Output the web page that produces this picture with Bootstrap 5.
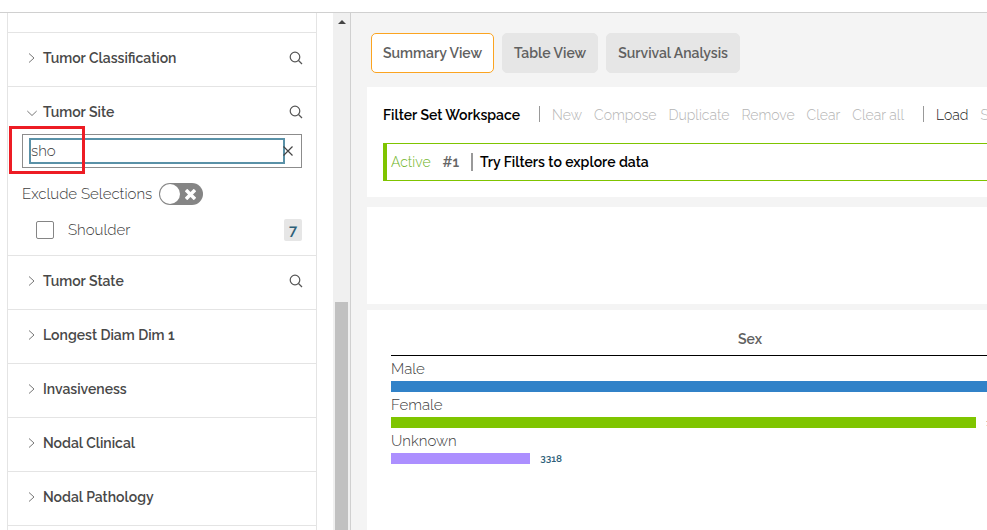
<!DOCTYPE html>
<html lang="en">
<head>
<meta charset="utf-8">
<meta name="viewport" content="width=device-width, initial-scale=1">
<title>Data Explorer</title>
<link href="https://cdn.jsdelivr.net/npm/bootstrap@5.3.0/dist/css/bootstrap.min.css" rel="stylesheet">
<style>
  body { font-family: Raleway, Lato, "Open Sans", sans-serif; font-size: 15px; line-height: 20px; color: #404040; font-weight: 300; }
  button { font: inherit; color: inherit; }
  .top-strip { height: 13px; border-bottom: 1px solid #d0d0d0; }
  .side-pane { width: 351px; border-right: 1px solid #d0d0d0; }
  .facet-list { margin: 0 16px 0 7px; border: solid #e4e4e4; border-width: 0 1px; }
  .facet { border-bottom: 1px solid #e4e4e4; }
  .facet-stub { height: 20px; }
  .facet-head { height: 53px; padding: 0 13px 3px 19px; }
  .facet-open .facet-head { height: 47px; padding-top: 5px; }
  .facet-title { font-weight: 600; font-size: 14px; color: #484848; gap: 6px; }
  .plain-btn { background: none; border: 0; padding: 0; }
  .plain-btn svg { display: block; }
  .facet-body { padding: 0 14px 14px; }
  .search-box { height: 34px; border: 1px solid #8c8c8c; padding: 0 6px; }
  .search-box input { height: 26px; border: 2px solid #5a91a7; padding: 0; color: #404040; font-weight: 300; outline: 0; min-width: 0; }
  .search-box .plain-btn { margin-left: -2px; margin-right: 2px; }
  .callout { position: absolute; left: -14px; top: -9px; width: 76px; height: 48px; border: 3px solid #ed1c24; pointer-events: none; }
  .exclude-row { margin-top: 15px; gap: 7px; }
  .toggle { width: 44px; height: 22px; border-radius: 11px; background: #858585; padding: 0 7px 0 1px; }
  .toggle i { width: 20px; height: 20px; border-radius: 50%; background: #fff; }
  .value-row { margin-top: 14px; padding-left: 14px; }
  .value-row .form-check-input { width: 18px; height: 18px; margin: 0 14px 0 0; border: 1px solid #858585; border-radius: 2px; }
  .tally { width: 18px; height: 22px; background: #e6e6e6; border-radius: 2px; color: #2c6078; font-weight: 600; line-height: 22px; }
  .scroll-track { width: 17px; background: #f0f0f0; padding: 7px 2px 0; }
  .scroll-thumb { width: 13px; margin-top: 278px; background: #c1c1c1; }
  .main-pane { background: #f4f4f4; padding: 20px 0 0 16px; min-width: 0; }
  .view-tabs { padding-left: 4px; gap: 8px; margin-bottom: 14px; }
  .view-tabs button { height: 40px; padding: 0 11px; border: 1px solid #e6e6e6; border-radius: 5px; background: #e6e6e6; font-weight: 600; font-size: 14px; color: #606060; }
  .view-tabs button.active { background: #fff; border-color: #fba421; }
  .panel { background: #fff; }
  .workspace { padding: 16px 0 16px 16px; margin-bottom: 10px; }
  .toolbar { height: 24px; gap: 12px; font-size: 14px; }
  .toolbar h1 { font-size: 14px; font-weight: 600; color: #000; margin: 0; line-height: 20px; }
  .toolbar button:disabled { color: #b4b4b4; }
  .toolbar button { color: #222; }
  .rule { width: 1px; height: 16px; background: #999; }
  .toolbar .rule { margin: 0 0 2px 7px; }
  .query { margin-top: 16px; height: 38px; border: 1px solid #7fc400; border-width: 1px 0 1px 4px; padding-left: 4px; gap: 12px; }
  .query .rule { width: 2px; height: 18px; }
  .query b, .query strong { font-weight: 600; font-size: 14px; }
  .query b { color: #666; }
  .query strong { color: #000; margin-left: -5px; }
  .query span { color: #6db324; font-size: 14px; }
  .blank-panel { height: 97px; margin-bottom: 6px; }
  .chart-panel { padding: 19px 0 0 24px; }
  .chart { width: 718px; }
  .chart h2 { font-size: 14px; line-height: 20px; font-weight: 600; color: #606060; margin: 0 0 3px; padding-bottom: 6px; border-bottom: 1px solid #000; }
  .series { height: 36px; }
  .series-name { height: 22px; }
  .series-line { height: 11px; gap: 10px; font-size: 10px; font-weight: 600; line-height: 11px; color: #2c6078; }
  .series-line div { height: 11px; }
  .bar-male { background: #3182c8; }
  .bar-female { background: #7fc500; }
  .bar-unknown { background: #ac8fff; }
</style>
</head>
<body class="vh-100 d-flex flex-column overflow-hidden bg-white">
<svg class="d-none">
  <symbol id="lens" viewBox="0 0 14 14"><circle cx="6" cy="6" r="4.8"/><path d="M9.5 9.5 13 13"/></symbol>
  <symbol id="right" viewBox="0 0 10 10"><path d="M2 0.5 7 5 2 9.500"/></symbol>
  <symbol id="down" viewBox="0 0 10 10"><path d="M0.300 4 5 8.500 9.700 4"/></symbol>
</svg>
<header class="top-strip flex-shrink-0"></header>
<div class="d-flex flex-grow-1 overflow-hidden">
  <aside class="side-pane d-flex flex-shrink-0 overflow-hidden">
    <div class="facet-list flex-grow-1">
      <div class="facet facet-stub"></div>
      <section class="facet">
        <div class="facet-head d-flex align-items-center justify-content-between">
          <button class="plain-btn facet-title d-flex align-items-center"><svg width="10" height="10" fill="none" stroke="#777"><use href="#right"/></svg>Tumor Classification</button>
          <button class="plain-btn" aria-label="Search tumor classification"><svg width="14" height="14" fill="none" stroke="#555" stroke-width="1.2"><use href="#lens"/></svg></button>
        </div>
      </section>
      <section class="facet facet-open">
        <div class="facet-head d-flex align-items-center justify-content-between">
          <button class="plain-btn facet-title d-flex align-items-center"><svg width="10" height="10" fill="none" stroke="#777"><use href="#down"/></svg>Tumor Site</button>
          <button class="plain-btn" aria-label="Search tumor site"><svg width="14" height="14" fill="none" stroke="#555" stroke-width="1.2"><use href="#lens"/></svg></button>
        </div>
        <div class="facet-body">
          <div class="search-box d-flex align-items-center position-relative">
            <input class="flex-grow-1" type="text" value="sho" aria-label="Search values">
            <button class="plain-btn" aria-label="Clear search"><svg width="10" height="10" fill="none" stroke="#444" stroke-width="1.2"><path d="M0.500 0.500 9.500 9.500M9.500 0.500 0.500 9.500"/></svg></button>
            <div class="callout"></div>
          </div>
          <div class="exclude-row d-flex align-items-center">
            <span id="exclude">Exclude Selections</span>
            <button class="plain-btn toggle d-flex align-items-center justify-content-between" role="switch" aria-checked="false" aria-labelledby="exclude"><i></i><svg width="11" height="11" stroke="#fff" stroke-width="3.500"><path d="M1 1 10 10M10 1 1 10"/></svg></button>
          </div>
          <div class="value-row d-flex align-items-center">
            <input class="form-check-input" type="checkbox" id="shoulder">
            <label class="flex-grow-1" for="shoulder">Shoulder</label>
            <span class="tally text-center">7</span>
          </div>
        </div>
      </section>
      <section class="facet">
        <div class="facet-head d-flex align-items-center justify-content-between">
          <button class="plain-btn facet-title d-flex align-items-center"><svg width="10" height="10" fill="none" stroke="#777"><use href="#right"/></svg>Tumor State</button>
          <button class="plain-btn" aria-label="Search tumor state"><svg width="14" height="14" fill="none" stroke="#555" stroke-width="1.2"><use href="#lens"/></svg></button>
        </div>
      </section>
      <section class="facet"><div class="facet-head d-flex align-items-center"><button class="plain-btn facet-title d-flex align-items-center"><svg width="10" height="10" fill="none" stroke="#777"><use href="#right"/></svg>Longest Diam Dim 1</button></div></section>
      <section class="facet"><div class="facet-head d-flex align-items-center"><button class="plain-btn facet-title d-flex align-items-center"><svg width="10" height="10" fill="none" stroke="#777"><use href="#right"/></svg>Invasiveness</button></div></section>
      <section class="facet"><div class="facet-head d-flex align-items-center"><button class="plain-btn facet-title d-flex align-items-center"><svg width="10" height="10" fill="none" stroke="#777"><use href="#right"/></svg>Nodal Clinical</button></div></section>
      <section class="facet"><div class="facet-head d-flex align-items-center"><button class="plain-btn facet-title d-flex align-items-center"><svg width="10" height="10" fill="none" stroke="#777"><use href="#right"/></svg>Nodal Pathology</button></div></section>
    </div>
    <div class="scroll-track d-flex flex-column align-items-center" aria-hidden="true">
      <svg class="flex-shrink-0" width="8" height="4" fill="#444"><path d="M4 0 8 4H0Z"/></svg>
      <div class="scroll-thumb flex-grow-1"></div>
    </div>
  </aside>
  <main class="main-pane flex-grow-1 overflow-hidden d-flex flex-column">
    <nav class="view-tabs d-flex" aria-label="Views">
      <button class="active">Summary View</button>
      <button>Table View</button>
      <button>Survival Analysis</button>
    </nav>
    <section class="panel workspace">
      <div class="toolbar d-flex align-items-center text-nowrap">
        <h1>Filter Set Workspace</h1>
        <span class="rule flex-shrink-0"></span>
        <button class="plain-btn" disabled>New</button>
        <button class="plain-btn" disabled>Compose</button>
        <button class="plain-btn" disabled>Duplicate</button>
        <button class="plain-btn" disabled>Remove</button>
        <button class="plain-btn" disabled>Clear</button>
        <button class="plain-btn" disabled>Clear all</button>
        <span class="rule flex-shrink-0"></span>
        <button class="plain-btn">Load</button>
        <button class="plain-btn" disabled>Save</button>
      </div>
      <div class="query d-flex align-items-center"><span>Active</span><b>#1</b><i class="rule"></i><strong>Try Filters to explore data</strong></div>
    </section>
    <section class="panel blank-panel flex-shrink-0"></section>
    <section class="panel chart-panel flex-grow-1">
      <div class="chart">
        <h2 class="text-center">Sex</h2>
        <div class="series"><div class="series-name">Male</div><div class="series-line d-flex"><div class="bar-male" style="width:92%"></div></div></div>
        <div class="series"><div class="series-name">Female</div><div class="series-line d-flex"><div class="bar-female" style="width:81.5%"></div><span>13964</span></div></div>
        <div class="series"><div class="series-name">Unknown</div><div class="series-line d-flex"><div class="bar-unknown" style="width:19.4%"></div><span>3318</span></div></div>
      </div>
    </section>
  </main>
</div>
<script src="https://cdn.jsdelivr.net/npm/bootstrap@5.3.0/dist/js/bootstrap.bundle.min.js"></script>
</body>
</html>
